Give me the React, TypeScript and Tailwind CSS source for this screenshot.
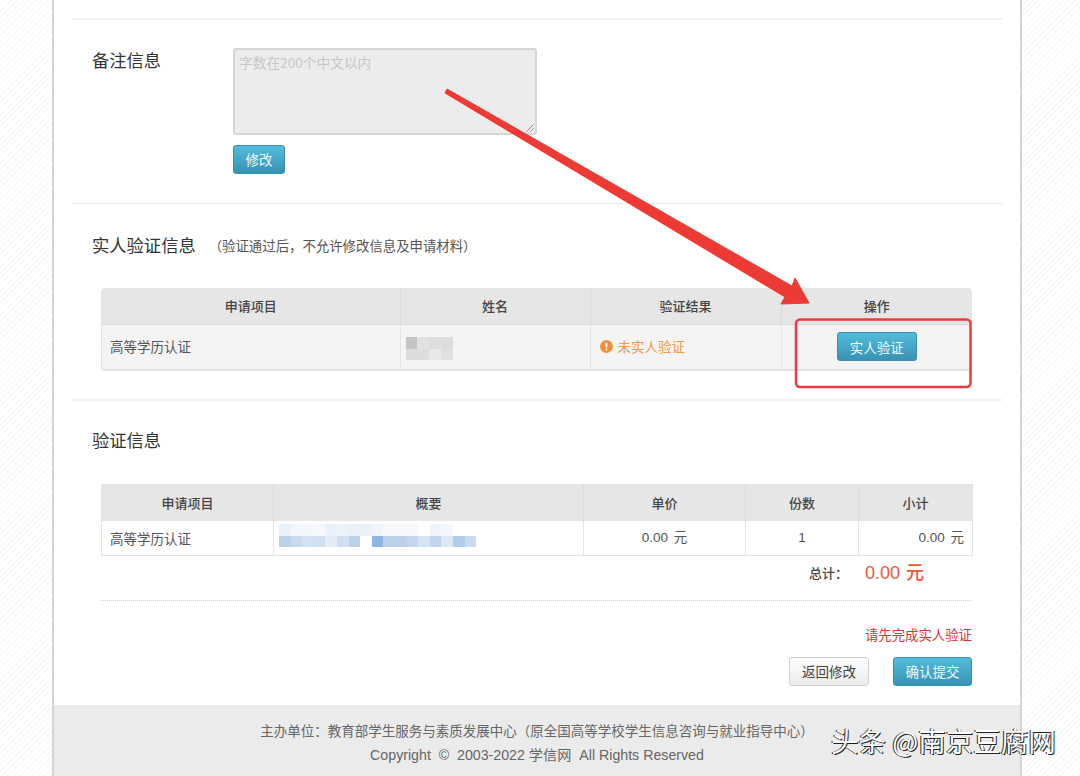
const nameMosaic = [
  ["#c4c4c4", "#e2e2e2", "#dedede", "#dcdcdc"],
  ["#dcdcdc", "#dddddd", "#e8e8e8", "#e0e0e0"],
];
const sumTop = ["#e8f0f8","#f3f7fb","#f3f7fb","#f6f8fb","#eaf1f8","#eef3f9","#e9f0f8","#eaf1f8","#f1f5fa","#f6f8fb","#f6f8fb","#f6f8fb","#ffffff","#eff4fa","#f3f6fa","#ffffff","#ffffff"];
const sumBottom = ["#b9d1e9","#c9daec","#d2e2f1","#cfe0f0","#e3ebf5","#d1dfef","#bad2ea","#ffffff","#8fb6de","#bcd2e9","#bdd2e9","#c4d7eb","#d6e3f1","#c0d5eb","#dde8f3","#b2cde8","#cbdcee"];

const fontStack = "font-['Noto_Sans_CJK_SC','Noto_Sans',sans-serif]";
const latinStack = "font-['Liberation_Sans','Noto_Sans_CJK_SC',sans-serif]";

function BlueButton({ label, className }: { label: string; className: string }) {
  return (
    <button className={`flex items-center justify-center rounded-[3px] border border-[#3a8fae] bg-gradient-to-b from-[#53bcdc] to-[#3892b3] text-[13.5px] text-[#eef9fc] ${className}`}>
      {label}
    </button>
  );
}

const th = "h-[36px] border-r border-[#dcdcdc] bg-[#e6e6e6] text-center text-[13px] font-medium text-[#444] last:border-r-0";

export default function App() {
  return (
    <div className={`relative h-[776px] w-[1080px] overflow-hidden bg-[repeating-linear-gradient(135deg,#ffffff_0px,#ffffff_3.2px,#f3f3f3_3.6px,#f3f3f3_4px,#ffffff_4.3px)] ${fontStack}`}>
      <div className="ml-[52px] flex h-[776px] w-[970px] flex-col border-x-2 border-[#d4d4d4] bg-white">
        <div className="flex flex-1 flex-col px-[18px]">
          <div className="h-[18px]" />

          <section className="flex h-[185px] border-t-2 border-[#f0f0f0] pl-[20px] pt-[28px]">
            <h2 className="w-[141px] text-[17.3px] leading-[24px] text-[#333]">备注信息</h2>
            <div className="flex flex-col">
              <div className="relative h-[87px] w-[304px] rounded-[3px] border-2 border-[#d6d6d6] bg-[#ececec] px-[4px] py-[2px] text-[13.7px] leading-[20px] text-[#c8c8c8]">
                字数在200个中文以内
                <svg className="absolute bottom-[1px] right-[1px]" width="8" height="8" viewBox="0 0 8 8">
                  <path d="M0.5 7.5 7.5 0.5M4.5 7.5 7.5 4.5" stroke="#777" strokeWidth="0.8" fill="none" />
                </svg>
              </div>
              <BlueButton label="修改" className="mt-[10px] h-[29px] w-[52px]" />
            </div>
          </section>

          <section className="h-[196px] border-t border-[#e9e9e9] pl-[20px]">
            <div className="flex h-[84px] items-start pt-[29px]">
              <h2 className="text-[17.3px] leading-[24px] text-[#333]">实人验证信息</h2>
              <span className="ml-[13px] pt-[2px] text-[13.4px] leading-[20px] text-[#555]">（验证通过后，不允许修改信息及申请材料）</span>
            </div>
            <div className="ml-[9px] w-[871px] overflow-hidden rounded-[4px] border-b-2 border-l border-[#e4e4e4]">
              <table className="w-full table-fixed border-collapse">
                <colgroup>
                  <col className="w-[298px]" />
                  <col className="w-[190px]" />
                  <col className="w-[191px]" />
                  <col className="w-[191px]" />
                </colgroup>
                <thead>
                  <tr className="border-b border-[#dcdcdc]">
                    <th className={th}>申请项目</th>
                    <th className={th}>姓名</th>
                    <th className={th}>验证结果</th>
                    <th className={th}>操作</th>
                  </tr>
                </thead>
                <tbody>
                  <tr className="h-[45px] bg-[#f4f4f4] text-[13.5px] text-[#555]">
                    <td className="border-r border-[#e4e4e4] pb-[1px] pl-[8px]">高等学历认证</td>
                    <td className="border-r border-[#e4e4e4] pl-[5px]">
                      <div className="mt-[4px] w-[47px]">
                        {nameMosaic.map((row, i) => (
                          <div key={i} className="flex">
                            {row.map((c, j) => (
                              <div key={j} className="h-[11.5px] w-[11.75px]" style={{ backgroundColor: c }} />
                            ))}
                          </div>
                        ))}
                      </div>
                    </td>
                    <td className="border-r border-[#e4e4e4] pb-[1px] pl-[9px]">
                      <div className="flex items-center gap-[5px] text-[#f39a45]">
                        <svg width="13" height="13" viewBox="0 0 13 13">
                          <circle cx="6.5" cy="6.5" r="6.5" fill="#f0923a" />
                          <rect x="5.6" y="2.6" width="1.8" height="4.9" rx="0.8" fill="#fff" />
                          <circle cx="6.5" cy="9.4" r="1" fill="#fff" />
                        </svg>
                        未实人验证
                      </div>
                    </td>
                    <td>
                      <div className="flex justify-center">
                        <BlueButton label="实人验证" className="h-[29px] w-[80px]" />
                      </div>
                    </td>
                  </tr>
                </tbody>
              </table>
            </div>
          </section>

          <section className="flex-1 border-t-2 border-[#f0f0f0] pl-[20px]">
            <div className="h-[83px] pt-[27px]">
              <h2 className="text-[17.3px] leading-[24px] text-[#333]">验证信息</h2>
            </div>
            <div className="ml-[9px] w-[871px]">
              <table className="w-full table-fixed border-collapse border border-[#e4e4e4]">
                <colgroup>
                  <col className="w-[172px]" />
                  <col className="w-[310px]" />
                  <col className="w-[162px]" />
                  <col className="w-[113px]" />
                  <col className="w-[114px]" />
                </colgroup>
                <thead>
                  <tr>
                    <th className={th}>申请项目</th>
                    <th className={th}>概要</th>
                    <th className={th}>单价</th>
                    <th className={th}>份数</th>
                    <th className={th}>小计</th>
                  </tr>
                </thead>
                <tbody>
                  <tr className="h-[35px] text-[13.5px] text-[#555]">
                    <td className="border-r border-[#e4e4e4] pl-[8px]">高等学历认证</td>
                    <td className="border-r border-[#e4e4e4] pl-[5px]">
                      <div className="mb-[4px]">
                        {[sumTop, sumBottom].map((row, i) => (
                          <div key={i} className="flex">
                            {row.map((c, j) => (
                              <div key={j} className="h-[11.5px] w-[11.6px]" style={{ backgroundColor: c }} />
                            ))}
                          </div>
                        ))}
                      </div>
                    </td>
                    <td className={`border-r border-[#e4e4e4] text-center [word-spacing:2px] ${latinStack}`}>0.00 元</td>
                    <td className={`border-r border-[#e4e4e4] text-center ${latinStack}`}>1</td>
                    <td className={`pr-[8px] text-right [word-spacing:2px] ${latinStack}`}>0.00 元</td>
                  </tr>
                </tbody>
              </table>
              <div className="flex h-[45px] items-start border-b border-dotted border-[#cfcfcf] pl-[708px] pt-[3px]">
                <span className="w-[56px] pt-[4px] text-[13px] font-medium leading-[20px] text-[#444]">总计：</span>
                <span className={`text-[18px] font-medium leading-[28px] [word-spacing:1px] text-[#f0553a] ${latinStack}`}>0.00 元</span>
              </div>
              <p className="mt-[23px] text-right text-[13.4px] leading-[20px] text-[#d9353a]">请先完成实人验证</p>
              <div className="mt-[13px] flex justify-end gap-[24px]">
                <button className="flex h-[29px] w-[80px] items-center justify-center rounded-[3px] border border-[#cfcfcf] bg-gradient-to-b from-[#ffffff] to-[#ebebeb] text-[13.5px] text-[#444]">
                  返回修改
                </button>
                <BlueButton label="确认提交" className="h-[29px] w-[79px]" />
              </div>
            </div>
          </section>
        </div>

        <footer className="flex h-[71px] flex-col items-center bg-[#ebebeb] pt-[13px] text-[13.5px] leading-[24px] text-[#666]">
          <p>主办单位：教育部学生服务与素质发展中心（原全国高等学校学生信息咨询与就业指导中心）</p>
          <p className={`mt-[1px] whitespace-pre text-[14.2px] ${latinStack}`}>Copyright  ©  2003-2022 学信网  All Rights Reserved</p>
        </footer>
      </div>

      {/* annotation drawn over the screenshot */}
      <svg className="pointer-events-none absolute left-0 top-0" width="1080" height="776" viewBox="0 0 1080 776">
        <path d="M447 89 L792 286 L795 278 L809 303 L781 304 L785 297 L445 93 Z" fill="#ee3a35" stroke="#ee3a35" strokeWidth="1" strokeLinejoin="round" />
        <rect x="796" y="319.5" width="174.5" height="67.5" rx="4" fill="none" stroke="#ee3a3f" strokeWidth="2.5" />
      </svg>

      <div className="absolute left-[831px] top-[723px] text-[27.5px] leading-[34px] text-white [text-shadow:1px_1px_0_#222,-1px_0_0_#222]">
        头条 @南京豆腐网
      </div>
    </div>
  );
}
